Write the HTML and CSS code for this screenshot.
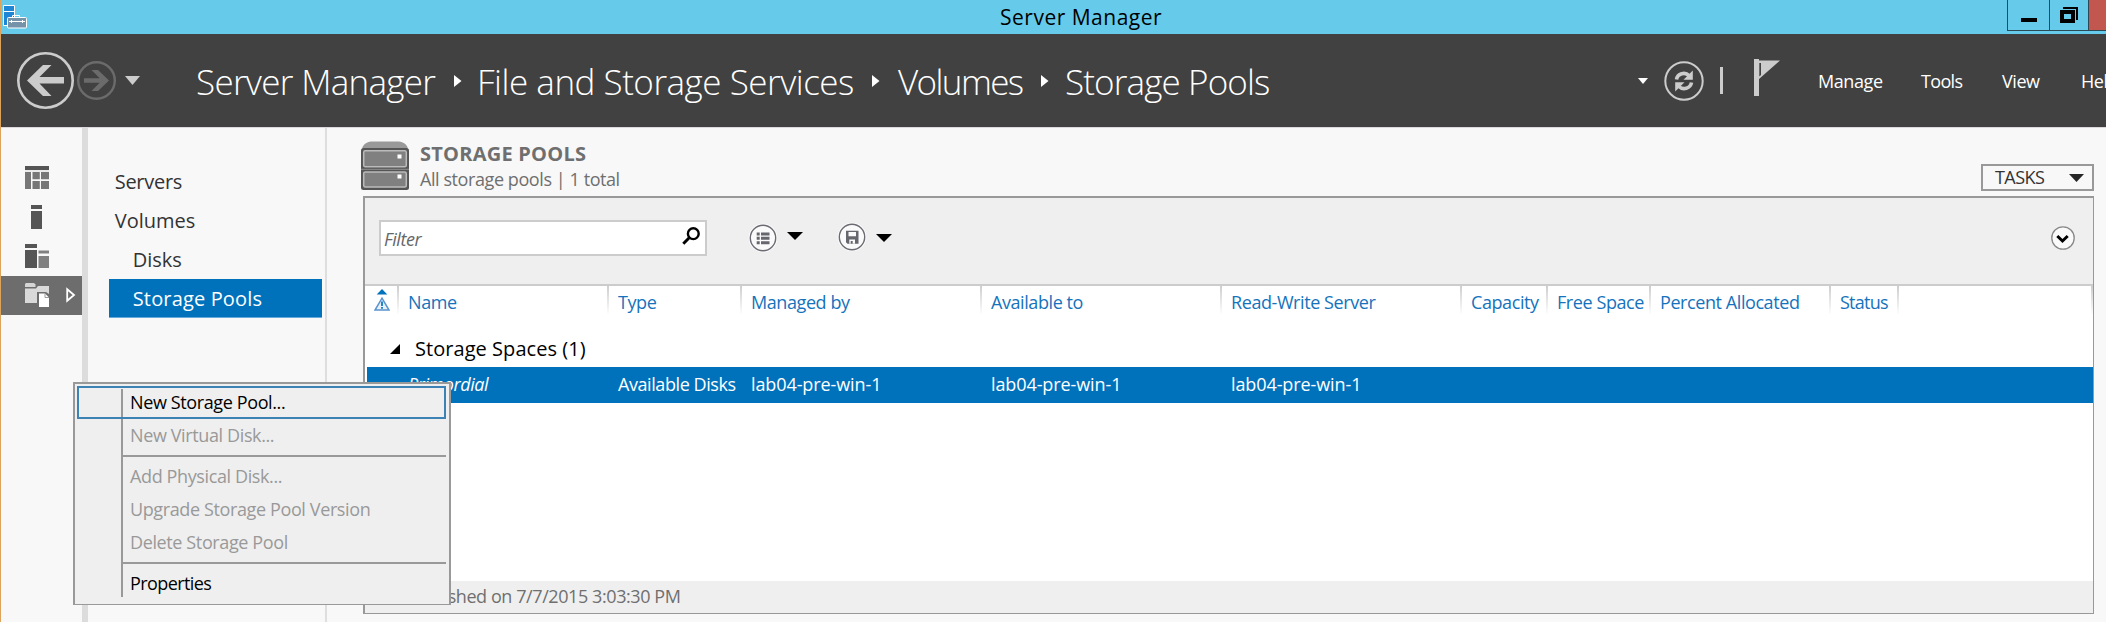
FILE: index.html
```html
<!DOCTYPE html>
<html lang="en">
<head>
<meta charset="utf-8">
<title>Server Manager</title>
<link rel="stylesheet" href="styles.css">
</head>
<body>
<div class="window">
  <header class="titlebar">
    <svg class="app-icon" width="26" height="26" viewBox="0 0 26 26">
      <path d="M1.5 1.500h11v20h-11z" fill="#1f86d6" stroke="#fff"/>
      <path d="M2 7.500h10" stroke="#fff"/>
      <path d="M10.500 13v-1.500h7V13" fill="none" stroke="#fff"/>
      <rect x="5.500" y="13.500" width="19" height="10.500" rx="1" fill="#7592a8" stroke="#fff"/>
      <path d="M7 17.500h16M9.500 16v3M20.500 16v3" stroke="#fff" fill="none"/>
    </svg>
    <h1 class="title">Server Manager</h1>
    <div class="window-buttons">
      <div class="wbtn wbtn-min"><svg width="16" height="4"><path d="M0 0h16v4H0z"/></svg></div>
      <div class="wbtn wbtn-restore"><svg width="18" height="16" viewBox="0 0 18 16"><path d="M3 0h15v13h-2V2H3zM0 3h15v13H0zM4 7v5h7V7z" fill-rule="evenodd"/></svg></div>
      <div class="wbtn wbtn-close"></div>
    </div>
  </header>

  <nav class="navbar">
    <svg class="back" width="57" height="57" viewBox="0 0 57 57">
      <circle cx="28.500" cy="28.500" r="27.200" fill="none" stroke="#ccc" stroke-width="2.600"/>
      <path d="M10 28.500L26 13h8.500L22.500 25H47v6.500H22.500L34.500 44H26z" fill="#ccc"/>
    </svg>
    <svg class="forward" width="39" height="39" viewBox="0 0 39 39">
      <circle cx="19.500" cy="19.500" r="18.300" fill="none" stroke="#6b6b6b" stroke-width="2.400"/>
      <path d="M32 19.500L21 9h-6.500l8.200 8.200H7v4.600h15.700L14.500 30H21z" fill="#6b6b6b"/>
    </svg>
    <svg class="history" width="15" height="9"><path d="M0 0h15L7.500 9z" fill="#ccc"/></svg>
    <div class="crumbs">
      <span class="crumb c-root">Server Manager</span>
      <svg width="8" height="12"><path d="M0 0l7.500 6L0 12z" fill="#fff"/></svg>
      <span class="crumb c-services">File and Storage Services</span>
      <svg width="8" height="12"><path d="M0 0l7.500 6L0 12z" fill="#fff"/></svg>
      <span class="crumb c-volumes">Volumes</span>
      <svg width="8" height="12"><path d="M0 0l7.500 6L0 12z" fill="#fff"/></svg>
      <span class="crumb c-pools">Storage Pools</span>
    </div>
    <div class="nav-tools">
      <svg class="drop" width="10" height="6"><path d="M0 0h10L5 6z" fill="#fff"/></svg>
      <svg class="refresh" width="40" height="40" viewBox="0 0 40 40">
        <circle cx="20" cy="20" r="18.700" fill="none" stroke="#ccc" stroke-width="2"/>
        <path d="M12.500 18.500c1-6 8.500-8 12.500-4" fill="none" stroke="#ccc" stroke-width="3.600"/>
        <path d="M28.800 9.500v9.300h-9.300l3-3 3-3z" fill="#ccc"/>
        <path d="M27.500 21.500c-1 6-8.500 8-12.500 4" fill="none" stroke="#ccc" stroke-width="3.600"/>
        <path d="M11.200 30.500v-9.300h9.300l-3 3-3 3z" fill="#ccc"/>
      </svg>
      <span class="divider"></span>
      <svg class="flag" width="27" height="37" viewBox="0 0 27 37">
        <path d="M0 0h5v1.500h21L5 20v17H0zM5.300 4v13.500l1.700-1.500V4z" fill="#ccc" fill-rule="evenodd"/>
      </svg>
    </div>
    <div class="menubar">
      <span class="m-manage">Manage</span><span class="m-tools">Tools</span><span class="m-view">View</span><span class="m-help">Help</span>
    </div>
  </nav>

  <div class="body">
    <aside class="rail">
      <div class="rail-item"><svg width="24" height="24" viewBox="0 0 24 24"><path d="M0 0h24v4H0z" fill="#555"/><path d="M0 6h6v17H0zM7.500 6h7.300v7.300H7.500zM16 6h8v7.300h-8zM7.500 15h7.300v8H7.500zM16 15h8v8h-8z" fill="#777"/><path d="M0 5h24" stroke="#ddd"/></svg></div>
      <div class="rail-item"><svg width="24" height="24" viewBox="0 0 24 24"><path d="M6 0h11v4H6zM6 6h11v18H6z" fill="#555"/></svg></div>
      <div class="rail-item"><svg width="24" height="24" viewBox="0 0 24 24"><path d="M0 0h12v4H0zM0 6h12v18H0z" fill="#555"/><path d="M13.500 6.500H24v3H13.500zM13.500 12H24v12H13.500z" fill="#808080"/></svg></div>
      <div class="rail-item rail-active"><svg width="24" height="24" viewBox="0 0 24 24"><path d="M1 0h8l1.500 1.500V4H0V1z" fill="#d4d4d4"/><path d="M0 5.500h11L13 3h11v8l-3-2h-9v11H0z" fill="#d9d9d9"/><path d="M14 10.500h6l4 4V24H14z" fill="#fff"/><path d="M20 10.500v4h4" fill="none" stroke="#999"/></svg>
        <svg class="expand" width="10" height="16" viewBox="0 0 10 16"><path d="M1.200 2.200v11.600L8 8z" fill="none" stroke="#fff" stroke-width="1.800"/></svg></div>
    </aside>

    <aside class="sidebar">
      <a class="side-item s-servers">Servers</a>
      <a class="side-item">Volumes</a>
      <a class="side-item side-sub">Disks</a>
      <a class="side-item side-sub side-selected">Storage Pools</a>
    </aside>

    <main class="content">
      <div class="tile-head">
        <svg class="tile-icon" width="48" height="50" viewBox="0 0 48 50">
          <path d="M1 7.500C3 2 7 .5 12 .5h24c5 0 9 1.500 11 7z" fill="#999"/>
          <rect x="0" y="7" width="48" height="42" rx="2.500" fill="#555"/>
          <rect x="2.700" y="9.700" width="42.600" height="16" rx="1.500" fill="#808080" stroke="#bbb" stroke-width="1.500"/>
          <rect x="2.700" y="31" width="42.600" height="15" rx="1.500" fill="#808080" stroke="#bbb" stroke-width="1.500"/>
          <path d="M0 28.300h48" stroke="#aaa" stroke-width=".7"/>
          <path d="M36.500 13.500h4v4h-4zM36.500 33.500h4v4h-4z" fill="#fff"/>
        </svg>
        <div class="tile-titles">
          <h2>STORAGE POOLS</h2>
          <p>All storage pools | 1 total</p>
        </div>
        <div class="tasks"><span>TASKS</span><svg width="15" height="8"><path d="M0 0h15L7.500 8z" fill="#262626"/></svg></div>
      </div>

      <section class="panel">
        <div class="toolbar">
          <div class="filter"><span>Filter</span>
            <svg width="18" height="18" viewBox="0 0 18 18"><circle cx="11.300" cy="6.700" r="5.400" fill="none" stroke="#000" stroke-width="2.400"/><path d="M7.200 10.800L1.300 16.700" stroke="#000" stroke-width="3"/></svg></div>
          <svg class="t-list" width="30" height="30" viewBox="0 0 30 30"><circle cx="15" cy="15" r="14.300" fill="#fff"/><circle cx="15" cy="15" r="12.700" fill="#fafafa" stroke="#6b6b73" stroke-width="1.400"/><path d="M8.700 9.500h3v3h-3zM13 9.500h8.500v3H13zM8.700 13.800h3v3h-3zM13 13.800h8.500v3H13zM8.700 18.200h3v3h-3zM13 18.200h8.500v3H13z" fill="#66666e"/></svg>
          <svg class="t-arrow1" width="16" height="8"><path d="M0 0h16L8 8z"/></svg>
          <svg class="t-save" width="30" height="30" viewBox="0 0 30 30"><circle cx="15" cy="15" r="14.300" fill="#fff"/><circle cx="15" cy="15" r="12.700" fill="#fafafa" stroke="#6b6b73" stroke-width="1.400"/><path d="M9 8.700h12.500v13H10.500L9 20.200zM11.500 10v4.300h7.500V10zM12.300 17.500v4h5.700v-4z" fill="#66666e" fill-rule="evenodd"/><path d="M13.700 19h2v2.700h-2z" fill="#66666e"/></svg>
          <svg class="t-arrow2" width="16" height="8"><path d="M0 0h16L8 8z"/></svg>
          <svg class="t-collapse" width="24" height="24" viewBox="0 0 24 24"><circle cx="12" cy="12" r="11.200" fill="#fafafa" stroke="#888" stroke-width="1.300"/><path d="M6.300 10l5.200 5 5.200-5" fill="none" stroke="#000" stroke-width="3"/></svg>
        </div>

        <div class="grid-row grid-head">
          <div class="cell cell-icon"><svg width="16" height="22" viewBox="0 0 16 22"><path d="M8 0l5.300 5.500H2.700z" fill="#0072bc"/><path d="M8 9.200L15 21H1z" fill="#e8f1fa" stroke="#5b94cc" stroke-width="1.500"/><path d="M8 12.500v4.500M8 18v1.800" stroke="#0072bc" stroke-width="1.700"/></svg></div>
          <div class="cell">Name</div><div class="cell">Type</div><div class="cell">Managed by</div><div class="cell">Available to</div><div class="cell">Read-Write Server</div><div class="cell">Capacity</div><div class="cell">Free Space</div><div class="cell">Percent Allocated</div><div class="cell cell-status">Status</div><div class="cell"></div>
        </div>
        <div class="group"><svg width="10" height="10"><path d="M10 0v10H0z"/></svg><span>Storage Spaces (1)</span></div>
        <div class="grid-row grid-selected">
          <div class="cell"></div><div class="cell cell-name">Primordial</div><div class="cell">Available Disks</div><div class="cell cell-host">lab04-pre-win-1</div><div class="cell cell-host">lab04-pre-win-1</div><div class="cell cell-host">lab04-pre-win-1</div>
        </div>
        <footer class="status">Refreshed on 7/7/2015 3:03:30 PM</footer>
      </section>
    </main>
  </div>

  <div class="context-menu">
    <div class="menu-item menu-hot">New Storage Pool...</div>
    <div class="menu-item menu-off">New Virtual Disk...</div>
    <div class="menu-sep"></div>
    <div class="menu-item menu-off">Add Physical Disk...</div>
    <div class="menu-item menu-off">Upgrade Storage Pool Version</div>
    <div class="menu-item menu-off">Delete Storage Pool</div>
    <div class="menu-sep"></div>
    <div class="menu-item menu-props">Properties</div>
  </div>
</div>
</body>
</html>
```
FILE: styles.css
```css
* { box-sizing: border-box; }
body { margin: 0; overflow: hidden; font-family: "Open Sans", "Noto Sans", sans-serif; font-size: 18px; letter-spacing: -0.42px; white-space: nowrap; }
svg { display: block; flex: none; }
h1, h2, p { margin: 0; font-weight: 400; }

.window { position: relative; width: 2106px; height: 622px; overflow: hidden; display: flex; flex-direction: column; border-left: 1px solid #dda35c; background: #f8f8f8; }

/* Title bar */
.titlebar { height: 34px; flex: none; display: flex; background: #66cbea; }
.app-icon { margin: 4px 0 0 1px; }
.title { margin-left: 972px; font-size: 21px; line-height: 35px; letter-spacing: 0.5px; color: #000; }
.window-buttons { margin-left: auto; display: flex; height: 31px; border: 1px solid #2c4a55; border-width: 0 0 1px 1px; }
.wbtn { height: 30px; border-right: 1px solid #2c4a55; }
.wbtn-min { width: 42px; padding: 18px 0 0 13px; }
.wbtn-restore { width: 39px; padding: 7px 0 0 10px; }
.wbtn-close { width: 17px; border: 0; background: #c1574f; }

/* Navigation bar */
.navbar { height: 94px; flex: none; display: flex; align-items: center; background: #414141; border-bottom: 1px solid #dcd8dc; color: #fff; }
.back { margin-left: 16px; }
.forward { margin-left: 3px; }
.history { margin: 0 0 1px 9px; }
.crumbs { flex: none; display: flex; align-items: center; margin-left: 56px; width: 1084px; font-size: 35px; font-weight: 300; line-height: 60px; }
.crumb { flex: none; margin-top: 3px; }
.c-root { width: 258px; letter-spacing: -0.69px; }
.c-services { width: 396px; margin-left: 14px; letter-spacing: -0.48px; padding-left: 1px; }
.c-volumes { width: 143px; margin-left: 18px; letter-spacing: -1.6px; }
.c-pools { margin-left: 16px; letter-spacing: -0.87px; }
.nav-tools { flex: none; display: flex; align-items: center; margin-left: 358px; width: 180px; }
.refresh { margin-left: 16px; }
.divider { width: 3px; height: 27px; margin-left: 16px; background: #ccc; }
.flag { margin: -6px 0 0 31px; }
.menubar { flex: none; display: flex; line-height: 34px; margin-top: 1px; }
.m-manage { width: 103px; }
.m-tools { width: 81px; letter-spacing: -0.65px; }
.m-view { width: 79px; }

/* Body */
.body { flex: 1; display: flex; }
.rail { width: 81px; padding-top: 31px; }
.rail-item { height: 39px; padding: 7px 0 0 24px; display: flex; }
.rail-active { background: #6d6d6d; }
.expand { margin: 4px 0 0 17px; }

.sidebar { width: 246px; padding-top: 34px; border-left: 6px solid #dcdcdc; border-right: 2px solid #dedede; font-size: 20px; letter-spacing: 0; color: #333; }
.side-item { display: block; height: 39px; line-height: 40px; padding-left: 27px; }
.s-servers { letter-spacing: -0.29px; }
.side-sub { margin: 0 3px 0 21px; padding-left: 24px; }
.side-selected { color: #fff; background: #0072bc; border-bottom: 1px solid #65aadd; letter-spacing: 0.15px; }

/* Tile */
.content { padding: 13px 12px 8px 34px; flex: 1; display: flex; flex-direction: column; }
.tile-head { display: flex; height: 55px; }
.tile-titles { margin-left: 11px; color: #6f6f6f; }
h2 { font-size: 20px; font-weight: 700; line-height: 25px; letter-spacing: 0.24px; }
.tile-titles p { line-height: 26px; }
.tasks { margin: 23px 0 0 auto; width: 113px; height: 27px; border: 2px solid #999; display: flex; align-items: center; color: #333; letter-spacing: -0.55px; line-height: 25px; }
.tasks span { width: 86px; padding-left: 12px; }

.panel { margin-left: 2px; flex: 1; display: flex; flex-direction: column; border: 2px solid #999; border-width: 2px 1px 1px 2px; background: #fff; }
.toolbar { height: 88px; flex: none; display: flex; background: #efefef; border-bottom: 2px solid #ccc; }
.filter { margin: 22px 0 0 14px; width: 328px; height: 36px; display: flex; justify-content: space-between; padding: 5px 5px 0 3px; border: 2px solid #ccc; background: #fff; font-style: italic; color: #666; line-height: 24px; }
.t-list { margin: 25px 0 0 41px; }
.t-arrow1 { margin: 34px 0 0 9px; }
.t-save { margin: 24px 0 0 34px; }
.t-arrow2 { margin: 36px 0 0 9px; }
.t-collapse { margin: 28px 18px 0 auto; }

.grid-row { display: grid; grid-template-columns: 34px 210px 133px 240px 240px 240px 86px 103px 180px 68px 194px; }
.grid-head { height: 50px; color: #1573bd; line-height: 33px; }
.cell { padding-left: 9px; }
.grid-head .cell { height: 28px; border-right: 2px solid; border-image: linear-gradient(#ccc, #fff) 1; }
.cell-status { letter-spacing: -0.75px; }
.grid-head .cell-icon { padding: 3px 0 0 9px; }
.group { height: 31px; display: flex; align-items: center; font-size: 20px; letter-spacing: 0.05px; line-height: 27px; }
.group svg { margin: -5px 0 0 25px; }
.group span { margin: -6px 0 0 15px; }
.grid-selected { height: 36px; margin: 0 0 0 2px; width: 1726px; line-height: 35px; color: #fff; background: #0072bc; grid-template-columns: 32px 210px 133px 240px 240px 240px; }
.cell-name { font-style: italic; }
.cell-host { letter-spacing: -0.1px; }
.status { margin-top: auto; height: 32px; padding-left: 40px; background: #efefef; color: #6f6f6f; line-height: 31px; }

/* Context menu floats over the sidebar and the tile */
.context-menu { position: absolute; left: 72px; top: 382px; width: 378px; height: 223px; padding: 2px; border: 2px solid #999; border-bottom-width: 1px; background: #efefef linear-gradient(#999, #999) 46px 5px / 2px 208px no-repeat; color: #000; letter-spacing: -0.38px; }
.menu-item { height: 33px; line-height: 32px; padding-left: 53px; }
.menu-hot { border: 2px solid #3c82b4; width: 369px; padding-left: 51px; line-height: 28px; }
.menu-off { color: #999; }
.menu-sep { height: 8px; margin: 0 2px 0 44px; width: 325px; background: linear-gradient(#999, #999) 0 3px / 100% 2px no-repeat; }
.menu-props { letter-spacing: -0.6px; }
```
